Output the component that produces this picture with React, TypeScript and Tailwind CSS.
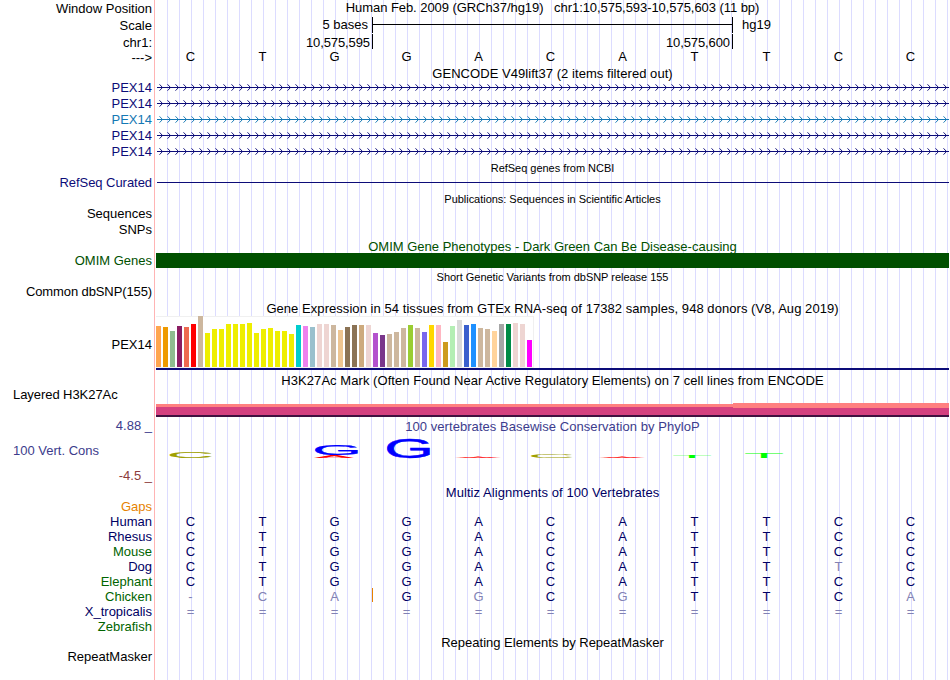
import type { ReactNode } from 'react';
import clsx from 'clsx';

interface RowProps {
  height: string;
  label?: ReactNode;
  labelClass?: string;
  children?: ReactNode;
}

function Row({ height, label, labelClass, children }: RowProps) {
  return (
    <div className={clsx('flex', height)}>
      <div className={clsx('w-[155px] shrink-0 border-r border-[#ffb4b4] pr-[2px] text-right', labelClass)}>
        {label}
      </div>
      <div className="ml-px w-[793px] bg-[repeating-linear-gradient(90deg,transparent_0px,transparent_11px,#dcdcff_11px,#dcdcff_12px)]">
        {children}
      </div>
    </div>
  );
}

function Title({ children, className }: { children: ReactNode; className?: string }) {
  return <div className={clsx('text-center whitespace-pre', className)}>{children}</div>;
}

function SmallTitle({ children }: { children: ReactNode }) {
  return <div className="pt-px text-center text-[11px] tracking-[-0.03px]">{children}</div>;
}

// lower case letters are bases that differ from the human sequence
function Bases({ seq, className }: { seq: string; className?: string }) {
  return (
    <div className={clsx('grid grid-cols-11 pr-px', className)}>
      {seq.split('').map((base, i) => (
        <span key={i} className={clsx('pr-[3px] text-center', /[a-z=-]/.test(base) && 'text-[#8282b4]')}>
          {base.toUpperCase()}
        </span>
      ))}
    </div>
  );
}

const ARROWS = Array.from({ length: 99 }, (_, i) => i * 8 + 6.5);

function Transcript({ color }: { color: string }) {
  return (
    <svg width="793" height="16" className="block" fill="none" stroke={color}>
      <path d="M1 7.5H793" />
      <path d={ARROWS.map((x) => `M${x - 3} 4.3L${x} 7.5L${x - 3} 10.7`).join('')} strokeWidth="0.95" />
    </svg>
  );
}

const TRANSCRIPTS = ['#0c0c78', '#0c0c78', '#1478b4', '#0c0c78', '#0c0c78'];

const TISSUES: [string, number][] = [
  ['#ffa54f', 41], ['#ee9a00', 40], ['#8fbc8f', 36], ['#8b1c62', 41], ['#ee6a50', 40], ['#ff0000', 43],
  ['#cdb79e', 51], ['#eeee00', 34], ['#eeee00', 38], ['#eeee00', 38], ['#eeee00', 43], ['#eeee00', 43],
  ['#eeee00', 43], ['#eeee00', 44], ['#eeee00', 34], ['#eeee00', 38], ['#eeee00', 39], ['#eeee00', 36],
  ['#eeee00', 36], ['#eeee00', 33], ['#00cdcd', 42], ['#ee82ee', 41], ['#9ac0cd', 40], ['#eed5d2', 43],
  ['#eed5d2', 43], ['#cdb79e', 42], ['#eec591', 37], ['#8b7355', 40], ['#8b7355', 42], ['#cdaa7d', 42],
  ['#eed5d2', 42], ['#b452cd', 34], ['#7a378b', 32], ['#cdb79e', 33], ['#cdb79e', 35], ['#cdb79e', 39],
  ['#9acd32', 42], ['#cdb79e', 39], ['#7a67ee', 35], ['#ffd700', 42], ['#ffb6c1', 42], ['#cd9b1d', 25],
  ['#b4eeb4', 41], ['#d9d9d9', 47], ['#3a5fcd', 42], ['#1e90ff', 43], ['#cdb79e', 39], ['#cdb79e', 38],
  ['#ffd39b', 36], ['#a6a6a6', 43], ['#008b45', 43], ['#eed5d2', 44], ['#eed5d2', 43], ['#ff00ff', 27],
];

// ink boxes of the glyphs, in units of 1/2048 em: left, right, bottom, top
const INK: Record<string, number[]> = {
  A: [4, 1362, 0, 1409],
  C: [102, 1386, -20, 1430],
  G: [103, 1466, -20, 1430],
  T: [42, 1208, 0, 1409],
};

const LOGO = [
  { base: 'C', x: 14, y: 33.3, w: 41, h: 6.5, color: '#a0a000', stroke: 1 },
  { base: 'A', x: 158, y: 37.6, w: 40, h: 2.2, color: '#ff0000', stroke: 0 },
  { base: 'G', x: 159.5, y: 27.4, w: 42.5, h: 9.8, color: '#0000ff', stroke: 1.5 },
  { base: 'G', x: 231.5, y: 20.6, w: 42.5, h: 19.4, color: '#0000ff', stroke: 1.5 },
  { base: 'A', x: 303, y: 38, w: 38, h: 1.7, color: '#ff0000', stroke: 8 },
  { base: 'C', x: 375, y: 36, w: 41, h: 4, color: '#a0a000', stroke: 0 },
  { base: 'A', x: 447, y: 38, w: 38, h: 1.7, color: '#ff0000', stroke: 8 },
  { base: 'T', x: 517, y: 37, w: 38, h: 3, color: '#00ff00', stroke: 0 },
  { base: 'T', x: 589, y: 35, w: 38, h: 5, color: '#00ff00', stroke: 0 },
];

function ConservationLogo() {
  return (
    <svg width="793" height="50" className="block">
      {LOGO.map(({ base, x, y, w, h, color, stroke }) => {
        const [left, right, bottom, top] = INK[base];
        const sx = (w / (right - left)) * 20.48;
        const sy = (h / (top - bottom)) * 20.48;
        return (
          <text
            key={x}
            fontSize="100"
            fill={color}
            stroke={stroke ? color : 'none'}
            strokeWidth={stroke}
            transform={`translate(${x - (left / 20.48) * sx} ${y + (top / 20.48) * sy}) scale(${sx} ${sy})`}
          >
            {base}
          </text>
        );
      })}
    </svg>
  );
}

const SPECIES = [
  { name: 'Human', color: 'text-[#000064]', seq: 'CTGGACATTCC' },
  { name: 'Rhesus', color: 'text-[#000064]', seq: 'CTGGACATTCC' },
  { name: 'Mouse', color: 'text-[#006400]', seq: 'CTGGACATTCC' },
  { name: 'Dog', color: 'text-[#000064]', seq: 'CTGGACATTtC' },
  { name: 'Elephant', color: 'text-[#006400]', seq: 'CTGGACATTCC' },
  { name: 'Chicken', color: 'text-[#006400]', seq: '-caGgCgTTCa' },
  { name: 'X_tropicalis', color: 'text-[#000064]', seq: '===========' },
  { name: 'Zebrafish', color: 'text-[#006400]', seq: '' },
];

export default function App() {
  return (
    <div className="h-[680px] w-[950px] overflow-hidden bg-white font-['Liberation_Sans',Arial,sans-serif] text-[13px] leading-[15px] text-black">
      <Row height="h-[17px]" label="Window Position" labelClass="pt-px">
        <Title className="tracking-[-0.06px]">
          {'Human Feb. 2009 (GRCh37/hg19)   chr1:10,575,593-10,575,603 (11 bp)'}
        </Title>
      </Row>
      <Row height="h-[17px]" label="Scale" labelClass="pt-px">
        <div className="flex">
          <span className="w-[216px] pr-[4px] text-right">5 bases</span>
          <div className="flex h-4 w-[361px] border-x border-black">
            <div className="mt-[7px] h-px w-full bg-black" />
          </div>
          <span className="pl-[9px]">hg19</span>
        </div>
      </Row>
      <Row height="h-[15px]" label="chr1:" labelClass="pt-px">
        <div className="flex h-[15px] tracking-[-0.1px]">
          <span className="w-[217px] border-r border-black pt-[2px] pr-[2px] text-right leading-[13px]">10,575,595</span>
          <span className="w-[360px] border-r border-black pt-[2px] pr-[2px] text-right leading-[13px]">10,575,600</span>
        </div>
      </Row>
      <Row height="h-[17px]" label="--->" labelClass="pt-px">
        <Bases seq="CTGGACATTCC" />
      </Row>

      <Row height="h-[14px]">
        <Title className="tracking-[0.05px]">GENCODE V49lift37 (2 items filtered out)</Title>
      </Row>
      {TRANSCRIPTS.map((color, i) => (
        <Row key={i} height="h-4" label="PEX14" labelClass={i === 2 ? 'text-[#1478b4]' : 'text-[#0c0c78]'}>
          <Transcript color={color} />
        </Row>
      ))}

      <Row height="h-[15px]">
        <SmallTitle>RefSeq genes from NCBI</SmallTitle>
      </Row>
      <Row height="h-4" label="RefSeq Curated" labelClass="text-[#0c0c78] tracking-[-0.05px]">
        <div className="pt-[7px] pl-px">
          <div className="h-px bg-[#0c0c78]" />
        </div>
      </Row>
      <Row height="h-[15px]">
        <SmallTitle>Publications: Sequences in Scientific Articles</SmallTitle>
      </Row>
      <Row height="h-4" label="Sequences" />
      <Row height="h-[17px]" label="SNPs" />

      <Row height="h-[14px]">
        <Title className="text-[#005000]">OMIM Gene Phenotypes - Dark Green Can Be Disease-causing</Title>
      </Row>
      <Row height="h-4" label="OMIM Genes" labelClass="text-[#005000]">
        <div className="h-[15px] bg-[#005000]" />
      </Row>
      <Row height="h-[15px]">
        <SmallTitle>Short Genetic Variants from dbSNP release 155</SmallTitle>
      </Row>
      <Row height="h-[17px]" label="Common dbSNP(155)" labelClass="tracking-[-0.11px]" />

      <Row height="h-[15px]">
        <Title className="tracking-[0.055px]">
          Gene Expression in 54 tissues from GTEx RNA-seq of 17382 samples, 948 donors (V8, Aug 2019)
        </Title>
      </Row>
      <Row height="h-[57px]" label="PEX14" labelClass="pt-[21px]">
        <div className="flex h-[52px] w-[378px] items-end gap-[2px] border-y border-r border-[#f0f0f0] bg-white">
          {TISSUES.map(([color, height], i) => (
            <div
              key={i}
              className={clsx('w-[5px] shrink-0', height > 50 && '-mt-px')}
              style={{ height, backgroundColor: color }}
            />
          ))}
        </div>
        <div className="h-[2px] bg-[#0c0c78]" />
      </Row>

      <Row height="h-[14px]">
        <Title className="tracking-[0.055px]">
          H3K27Ac Mark (Often Found Near Active Regulatory Elements) on 7 cell lines from ENCODE
        </Title>
      </Row>
      <Row height="h-[31px]" label="Layered H3K27Ac" labelClass="pl-[13px] text-left! tracking-[-0.06px]">
        <div className="flex items-end pt-4">
          <div className="h-[13px] w-[577px] border-t-[3px] border-b-2 border-t-[#ff8080] border-b-[#401040] bg-[#d4407f]" />
          <div className="h-[14px] flex-1 border-t-[5px] border-b-2 border-t-[#ff8080] border-b-[#401040] bg-[#d4407f]" />
        </div>
      </Row>

      <Row
        height="h-[67px]"
        labelClass="text-[#3c3c8c]"
        label={
          <div className="flex flex-col gap-[10px]">
            <span>4.88 _</span>
            <span className="pl-[13px] text-left">100 Vert. Cons</span>
            <span className="text-[#8c3c3c]">-4.5 _</span>
          </div>
        }
      >
        <Title className="h-4 pt-px tracking-[0.055px] text-[#3c3c8c]">
          100 vertebrates Basewise Conservation by PhyloP
        </Title>
        <div className="-mt-4">
          <ConservationLogo />
        </div>
      </Row>

      <Row height="h-[14px]">
        <Title className="tracking-[0.07px] text-[#000064]">Multiz Alignments of 100 Vertebrates</Title>
      </Row>
      <Row height="h-[15px]" label="Gaps" labelClass="text-[#e68200]" />
      {SPECIES.map(({ name, color, seq }) => (
        <Row key={name} height={name === 'Zebrafish' ? 'h-4' : 'h-[15px]'} label={name} labelClass={color}>
          <div className="relative">
            <Bases seq={seq} className="text-[#000064]" />
            {/* insertion in the chicken sequence */}
            {name === 'Chicken' && <div className="absolute top-[-1px] left-[216px] h-[14px] w-px bg-[#e68200]" />}
          </div>
        </Row>
      ))}

      <Row height="h-[14px]">
        <Title>Repeating Elements by RepeatMasker</Title>
      </Row>
      <Row height="h-[31px]" label="RepeatMasker" />
    </div>
  );
}
